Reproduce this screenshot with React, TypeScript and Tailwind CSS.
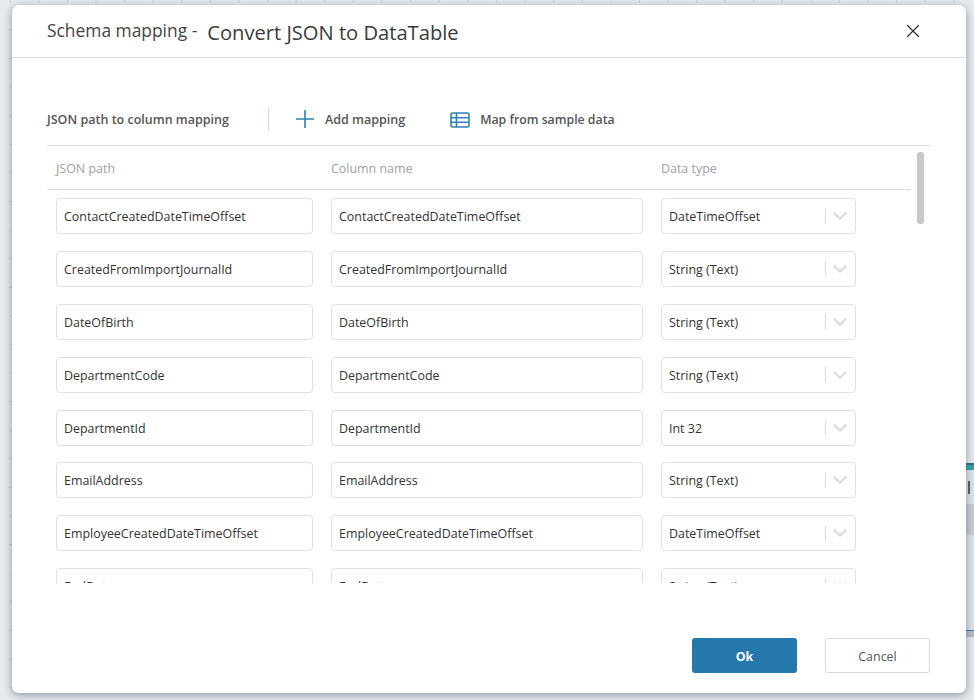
import React from 'react';
import { X, ChevronDown } from 'lucide-react';

const rows = [
  { path: 'ContactCreatedDateTimeOffset', type: 'DateTimeOffset' },
  { path: 'CreatedFromImportJournalId', type: 'String (Text)' },
  { path: 'DateOfBirth', type: 'String (Text)' },
  { path: 'DepartmentCode', type: 'String (Text)' },
  { path: 'DepartmentId', type: 'Int 32' },
  { path: 'EmailAddress', type: 'String (Text)' },
  { path: 'EmployeeCreatedDateTimeOffset', type: 'DateTimeOffset' },
  { path: 'EndDate', type: 'String (Text)' },
];

const PlusIcon = () => (
  <svg width="18" height="18" viewBox="0 0 18 18" fill="none" stroke="#2f82b3" strokeWidth="1.6">
    <path d="M9 0v18M0 9h18" />
  </svg>
);

const TableIcon = () => (
  <svg width="20" height="16" viewBox="0 0 20 16" fill="none" stroke="#2f82b3" strokeWidth="1.6">
    <rect x="1" y="1" width="18" height="14" rx="1.5" />
    <path d="M1 5.7h18M1 10.3h18M6.5 1v14" />
  </svg>
);

const TextField = ({ value, width }: { value: string; width: string }) => (
  <div className={`${width} h-[36px] shrink-0 flex items-center pl-[7px] border-[1.5px] border-[#e0e0e0] rounded-[4px] text-[12.45px] text-[#333] whitespace-nowrap`}>
    <span className="mt-[2.8px]">{value}</span>
  </div>
);

const SelectField = ({ value }: { value: string }) => (
  <div className="w-[195px] h-[36px] shrink-0 flex items-center pl-[7px] pr-[4px] border-[1.5px] border-[#e0e0e0] rounded-[4px] text-[12.45px] text-[#333]">
    <span className="flex-1 whitespace-nowrap mt-[2.8px]">{value}</span>
    <span className="w-px h-[15px] bg-[#d8d8d8] mr-[3px]" />
    <ChevronDown size={22} strokeWidth={2.6} className="text-[#dcdcdc]" />
  </div>
);

const App: React.FC = () => {
  return (
    <div className="relative w-[974px] h-[700px] overflow-hidden bg-[#e7eaee] bg-[radial-gradient(circle,#a9aeb6_0.8px,transparent_1px)] bg-[length:28.6px_28.6px] bg-[position:-4px_-13px] font-['Open_Sans','Noto_Sans',sans-serif]">
      {/* canvas peeking out behind the dialog */}
      <div className="absolute left-[960px] top-[463px] w-[14px] h-[174px] bg-[#dfe2e7]">
        <div className="h-[2px] bg-[#1f6f8f]" />
        <div className="h-[5px] bg-[#2aa3a8]" />
        <div className="absolute left-[8px] top-[18px] w-[2px] h-[13px] bg-[#555a60]" />
        <div className="absolute left-0 right-0 top-[41px] h-[31px] bg-[#c6cbd5]" />
        <div className="absolute left-0 right-0 bottom-0 h-[7px] bg-[#b4bac6] border-t border-[#2478ab]" />
      </div>

      <div className="relative ml-[12px] mt-[5px] w-[954px] h-[688px] flex flex-col bg-white rounded-[7px] shadow-[0_2px_8px_rgba(80,90,110,0.6)]">
        <header className="h-[53px] shrink-0 flex items-center pl-[35px] pr-[45px] border-b border-[#dcdcdc]">
          <span className="text-[17.4px] text-[#444] mr-[10px] -mt-[1px]">Schema mapping -</span>
          <span className="text-[20.15px] font-medium text-[#3a3a3a] mt-[3px]">Convert JSON to DataTable</span>
          <X size={22} strokeWidth={1.4} className="ml-auto text-[#333] mr-[-3px]" />
        </header>

        <div className="flex-1 min-h-0 flex flex-col pt-[50px] pl-[35px] pr-[36px]">
          <div className="h-[22px] shrink-0 flex items-center text-[#555] text-[12.5px] font-semibold">
            <span className="mt-[3px]">JSON path to column mapping</span>
            <span className="w-px h-[22px] bg-[#c9d9e3] ml-[39px] mr-[27px]" />
            <PlusIcon />
            <span className="ml-[11px] mt-[3px]">Add mapping</span>
            <span className="ml-[45px] mt-[1px]"><TableIcon /></span>
            <span className="ml-[10px] mt-[3px] text-[12.3px]">Map from sample data</span>
          </div>

          <div className="relative mt-[15px] h-[438px] shrink-0 border-t border-[#dcdcdc] overflow-hidden">
            <div className="w-[864px] h-[44px] flex items-center border-b border-[#dcdcdc] pl-[9px] text-[12.45px] text-[#a0a0a0]">
              <span className="w-[275px] mt-[3px]">JSON path</span>
              <span className="w-[330px] mt-[3px]">Column name</span>
              <span className="mt-[3px]">Data type</span>
            </div>
            <div className="flex flex-col gap-[16.875px] pt-[8px] pl-[9px]">
              {rows.map((row) => (
                <div key={row.path} className="flex gap-[18px]">
                  <TextField value={row.path} width="w-[257px]" />
                  <TextField value={row.path} width="w-[312px]" />
                  <SelectField value={row.type} />
                </div>
              ))}
            </div>
            <div className="absolute right-[6px] top-[6px] w-[7px] h-[72px] rounded-[3px] bg-[#c9c9c9]" />
          </div>
        </div>

        <footer className="h-[55px] mb-[10px] shrink-0 flex items-center justify-end gap-[28px] pr-[36px] text-[12.45px]">
          <button className="w-[105px] h-[35px] pt-[3px] rounded-[3px] bg-[#2478ab] text-white font-bold">Ok</button>
          <button className="w-[105px] h-[35px] pt-[3px] rounded-[3px] bg-white border border-[#d9d9d9] text-[#555] font-medium">Cancel</button>
        </footer>
      </div>
    </div>
  );
};

export default App;
